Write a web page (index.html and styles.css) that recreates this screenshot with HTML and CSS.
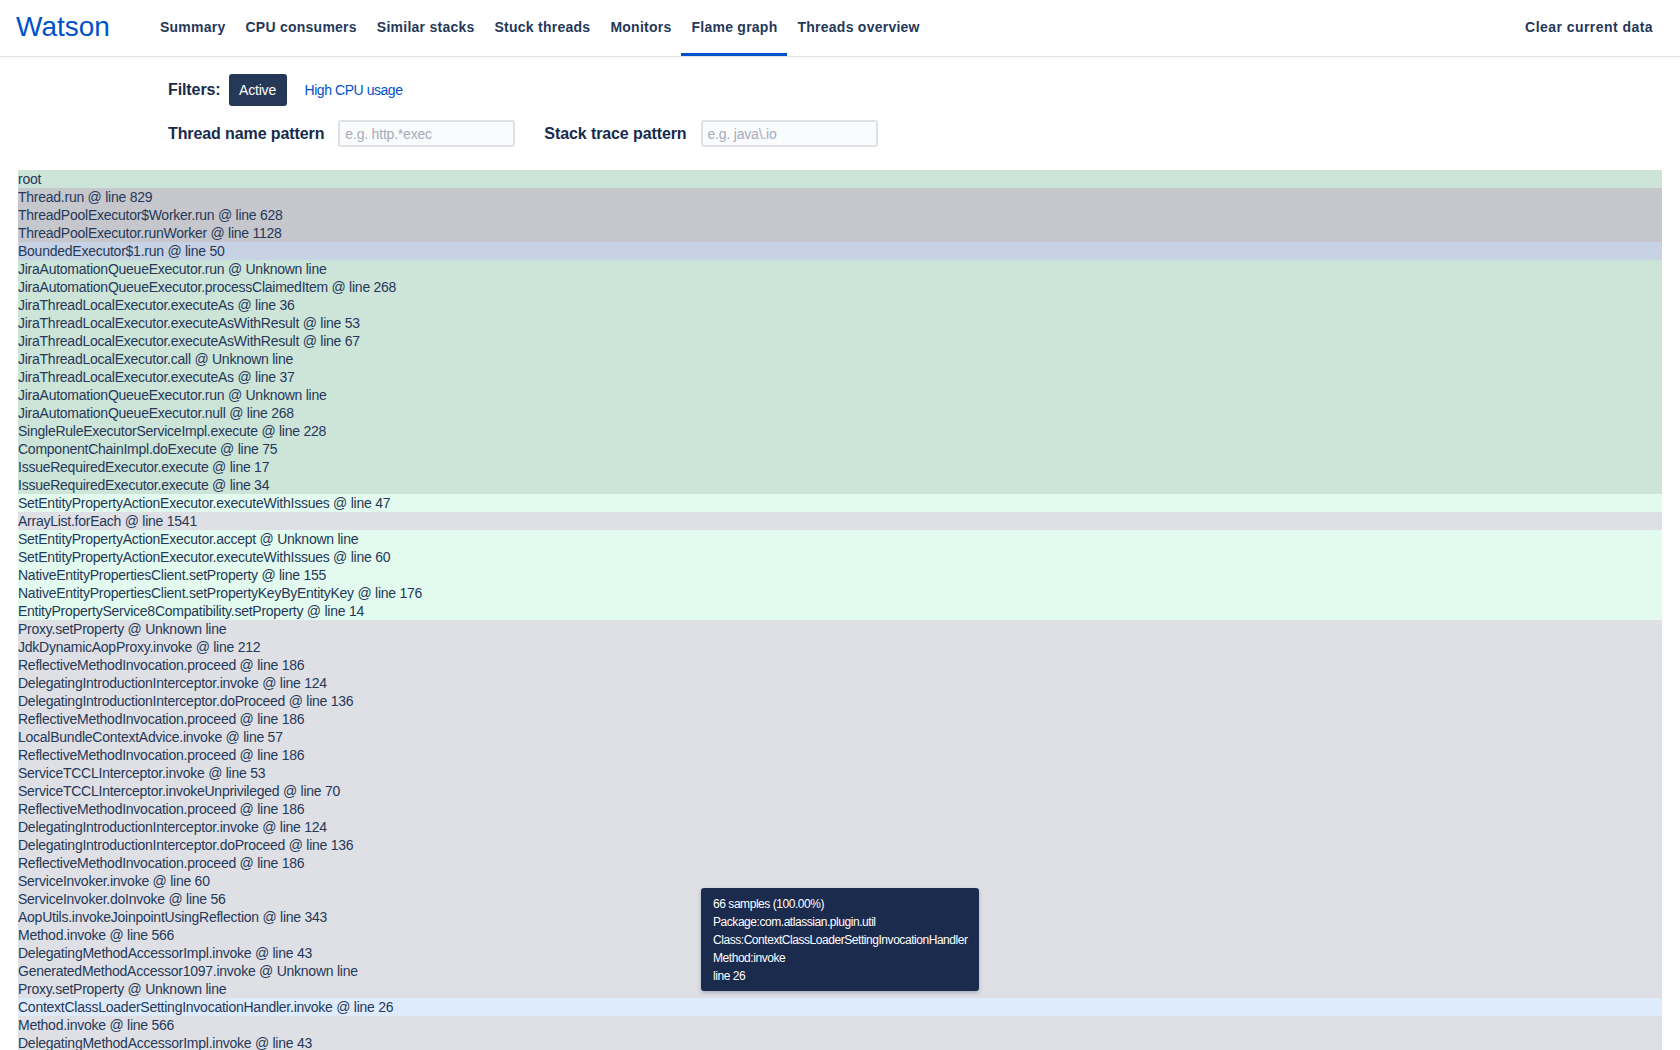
FILE: index.html
```html
<!DOCTYPE html>
<html>
<head>
<meta charset="utf-8">
<title>Watson - Flame graph</title>
<link rel="stylesheet" href="styles.css">
</head>
<body>
<header class="topbar">
  <a class="logo" href="#">Watson</a>
  <nav class="nav">
    <a class="nav-item" href="#">Summary</a>
    <a class="nav-item" href="#">CPU consumers</a>
    <a class="nav-item" href="#">Similar stacks</a>
    <a class="nav-item" href="#">Stuck threads</a>
    <a class="nav-item" href="#">Monitors</a>
    <a class="nav-item active" href="#">Flame graph</a>
    <a class="nav-item" href="#">Threads overview</a>
  </nav>
  <a class="nav-item clear" href="#">Clear current data</a>
</header>

<section class="filters">
  <div class="filter-row">
    <span class="label">Filters:</span>
    <button class="btn-active">Active</button>
    <a class="link" href="#">High CPU usage</a>
  </div>
  <div class="filter-row patterns">
    <label class="label">Thread name pattern</label>
    <input class="pattern" type="text" placeholder="e.g. http.*exec">
    <label class="label label-second">Stack trace pattern</label>
    <input class="pattern" type="text" placeholder="e.g. java\.io">
  </div>
</section>

<div class="flame">
  <div class="frame c-green">root</div>
  <div class="frame c-gray">Thread.run @ line 829</div>
  <div class="frame c-gray">ThreadPoolExecutor$Worker.run @ line 628</div>
  <div class="frame c-gray">ThreadPoolExecutor.runWorker @ line 1128</div>
  <div class="frame c-blue">BoundedExecutor$1.run @ line 50</div>
  <div class="frame c-green">JiraAutomationQueueExecutor.run @ Unknown line</div>
  <div class="frame c-green">JiraAutomationQueueExecutor.processClaimedItem @ line 268</div>
  <div class="frame c-green">JiraThreadLocalExecutor.executeAs @ line 36</div>
  <div class="frame c-green">JiraThreadLocalExecutor.executeAsWithResult @ line 53</div>
  <div class="frame c-green">JiraThreadLocalExecutor.executeAsWithResult @ line 67</div>
  <div class="frame c-green">JiraThreadLocalExecutor.call @ Unknown line</div>
  <div class="frame c-green">JiraThreadLocalExecutor.executeAs @ line 37</div>
  <div class="frame c-green">JiraAutomationQueueExecutor.run @ Unknown line</div>
  <div class="frame c-green">JiraAutomationQueueExecutor.null @ line 268</div>
  <div class="frame c-green">SingleRuleExecutorServiceImpl.execute @ line 228</div>
  <div class="frame c-green">ComponentChainImpl.doExecute @ line 75</div>
  <div class="frame c-green">IssueRequiredExecutor.execute @ line 17</div>
  <div class="frame c-green">IssueRequiredExecutor.execute @ line 34</div>
  <div class="frame c-mint">SetEntityPropertyActionExecutor.executeWithIssues @ line 47</div>
  <div class="frame c-light">ArrayList.forEach @ line 1541</div>
  <div class="frame c-mint">SetEntityPropertyActionExecutor.accept @ Unknown line</div>
  <div class="frame c-mint">SetEntityPropertyActionExecutor.executeWithIssues @ line 60</div>
  <div class="frame c-mint">NativeEntityPropertiesClient.setProperty @ line 155</div>
  <div class="frame c-mint">NativeEntityPropertiesClient.setPropertyKeyByEntityKey @ line 176</div>
  <div class="frame c-mint">EntityPropertyService8Compatibility.setProperty @ line 14</div>
  <div class="frame c-light">Proxy.setProperty @ Unknown line</div>
  <div class="frame c-light">JdkDynamicAopProxy.invoke @ line 212</div>
  <div class="frame c-light">ReflectiveMethodInvocation.proceed @ line 186</div>
  <div class="frame c-light">DelegatingIntroductionInterceptor.invoke @ line 124</div>
  <div class="frame c-light">DelegatingIntroductionInterceptor.doProceed @ line 136</div>
  <div class="frame c-light">ReflectiveMethodInvocation.proceed @ line 186</div>
  <div class="frame c-light">LocalBundleContextAdvice.invoke @ line 57</div>
  <div class="frame c-light">ReflectiveMethodInvocation.proceed @ line 186</div>
  <div class="frame c-light">ServiceTCCLInterceptor.invoke @ line 53</div>
  <div class="frame c-light">ServiceTCCLInterceptor.invokeUnprivileged @ line 70</div>
  <div class="frame c-light">ReflectiveMethodInvocation.proceed @ line 186</div>
  <div class="frame c-light">DelegatingIntroductionInterceptor.invoke @ line 124</div>
  <div class="frame c-light">DelegatingIntroductionInterceptor.doProceed @ line 136</div>
  <div class="frame c-light">ReflectiveMethodInvocation.proceed @ line 186</div>
  <div class="frame c-light">ServiceInvoker.invoke @ line 60</div>
  <div class="frame c-light">ServiceInvoker.doInvoke @ line 56</div>
  <div class="frame c-light">AopUtils.invokeJoinpointUsingReflection @ line 343</div>
  <div class="frame c-light">Method.invoke @ line 566</div>
  <div class="frame c-light">DelegatingMethodAccessorImpl.invoke @ line 43</div>
  <div class="frame c-light">GeneratedMethodAccessor1097.invoke @ Unknown line</div>
  <div class="frame c-light">Proxy.setProperty @ Unknown line</div>
  <div class="frame c-sky">ContextClassLoaderSettingInvocationHandler.invoke @ line 26</div>
  <div class="frame c-light">Method.invoke @ line 566</div>
  <div class="frame c-light">DelegatingMethodAccessorImpl.invoke @ line 43</div>

  <div class="tooltip">
    <div>66 samples (100.00%)</div>
    <div>Package:com.atlassian.plugin.util</div>
    <div>Class:ContextClassLoaderSettingInvocationHandler</div>
    <div>Method:invoke</div>
    <div>line 26</div>
  </div>
</div>
</body>
</html>
```

FILE: styles.css
```css
* { box-sizing: border-box; }

html, body {
  margin: 0;
  padding: 0;
  background: #ffffff;
  font-family: "Liberation Sans", Arial, sans-serif;
  color: #253858;
}

a { text-decoration: none; }

.topbar {
  display: flex;
  align-items: stretch;
  height: 56px;
  padding: 0 17px 0 16px;
  background: #ffffff;
  box-shadow: 0 1px 0 #e4e6ea, 0 2px 2px rgba(9, 30, 66, 0.06);
  position: relative;
  z-index: 2;
}

.logo {
  display: flex;
  align-items: center;
  font-size: 28px;
  color: #0052cc;
  padding-bottom: 3px;
}

.nav {
  display: flex;
  margin-left: 40px;
}

.nav-item {
  display: flex;
  align-items: center;
  padding: 0 10px;
  font-size: 14px;
  font-weight: bold;
  color: #253858;
  border-bottom: 3px solid transparent;
  letter-spacing: 0.25px;
}

.nav-item.active {
  border-bottom-color: #0052cc;
}

.nav-item.clear {
  margin-left: auto;
  letter-spacing: 0.45px;
}

.filters {
  padding: 18px 0 0 168px;
  display: flex;
  flex-direction: column;
  gap: 14px;
}

.filter-row {
  display: flex;
  align-items: center;
  height: 32px;
}

.filter-row.patterns {
  height: 27px;
}

.label {
  font-size: 16px;
  font-weight: bold;
  color: #172b4d;
  letter-spacing: -0.1px;
}

.btn-active {
  margin-left: 8px;
  height: 32px;
  width: 58px;
  border: none;
  border-radius: 3px;
  background: #253858;
  color: #ffffff;
  font-family: "Liberation Sans", Arial, sans-serif;
  font-size: 14px;
  padding: 0;
  letter-spacing: -0.2px;
}

.link {
  margin-left: 18px;
  font-size: 14px;
  color: #0052cc;
  letter-spacing: -0.45px;
}

.pattern {
  margin-left: 14px;
  width: 177px;
  height: 27px;
  border: 2px solid #dfe1e6;
  border-radius: 3px;
  background: #fafbfc;
  padding: 0 5px;
  font-family: "Liberation Sans", Arial, sans-serif;
  font-size: 14px;
  color: #172b4d;
  letter-spacing: -0.2px;
}

.pattern::placeholder {
  color: #a5adba;
}

.label-second {
  margin-left: 29px;
}

.flame {
  margin: 23px 18px 0 18px;
  position: relative;
}

.frame {
  height: 18px;
  line-height: 18px;
  font-size: 14px;
  letter-spacing: -0.25px;
  color: #253858;
  white-space: nowrap;
  overflow: hidden;
}

.c-green { background: #cde4d8; }
.c-gray  { background: #c6c7cd; }
.c-blue  { background: #c7d3e5; }
.c-mint  { background: #e3fbee; }
.c-light { background: #dfe0e5; }
.c-sky   { background: #deebfd; }

.tooltip {
  position: absolute;
  left: 683px;
  top: 718px;
  width: 278px;
  padding: 7px 12px 6px 12px;
  background: #1b2b4e;
  border-radius: 3px;
  color: #ffffff;
  font-size: 12px;
  line-height: 18px;
  letter-spacing: -0.45px;
  box-shadow: 0 2px 4px rgba(9, 30, 66, 0.25);
  white-space: nowrap;
}
```
